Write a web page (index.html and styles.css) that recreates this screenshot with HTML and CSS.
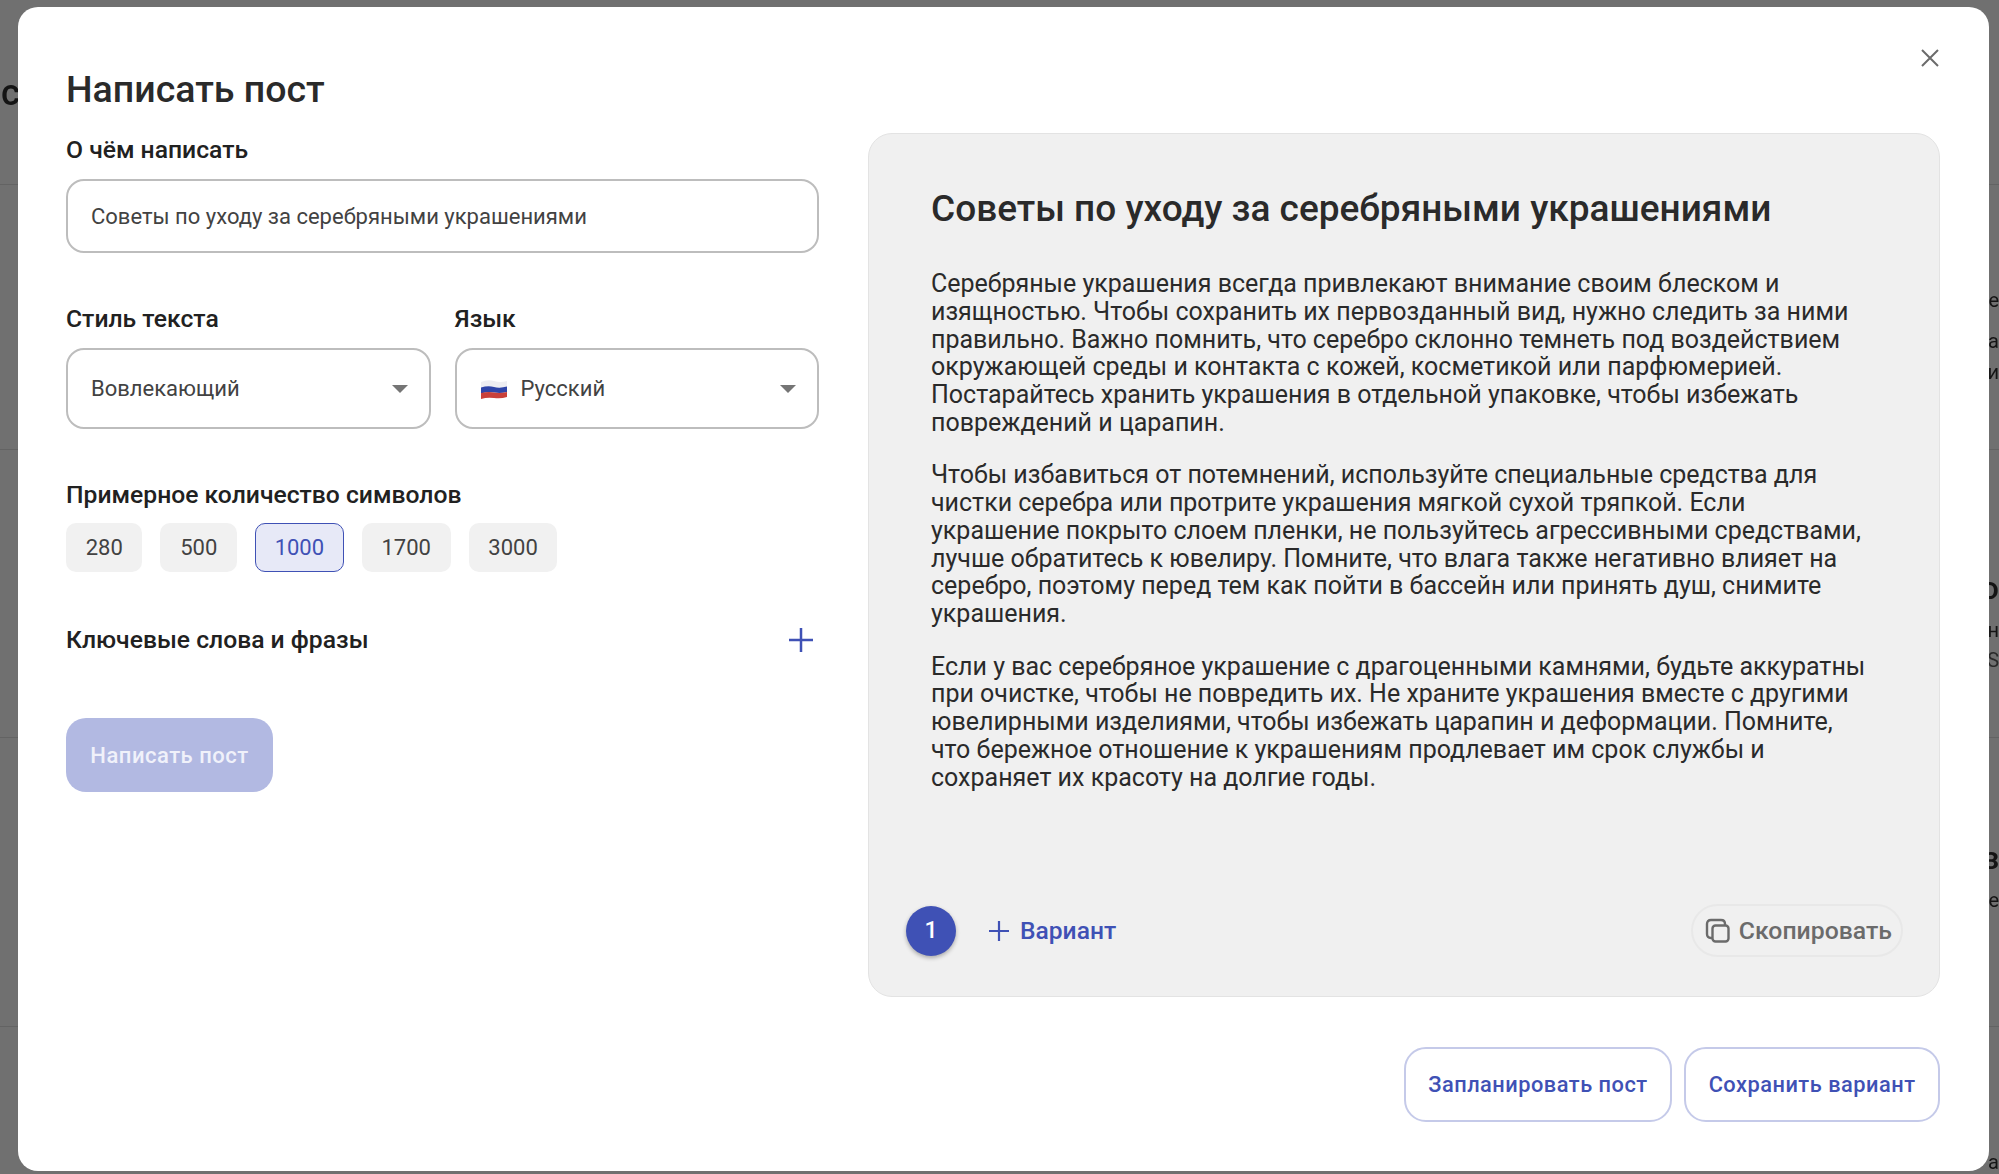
FILE: index.html
```html
<!DOCTYPE html>
<html lang="ru">
<head>
  <meta charset="UTF-8">
  <title>Написать пост</title>
  <link rel="stylesheet" href="styles.css">
</head>
<body>
  <!-- page behind the dimmed overlay -->
  <div class="backdrop">
    <div class="bg-line bg-line-1"></div>
    <div class="bg-line bg-line-2"></div>
    <div class="bg-line bg-line-3"></div>
    <div class="bg-line bg-line-4"></div>
    <span class="bg-char bg-char-1">с</span>
    <span class="bg-char bg-char-2">е</span>
    <span class="bg-char bg-char-3">а</span>
    <span class="bg-char bg-char-4">и</span>
    <span class="bg-char bg-char-5">о</span>
    <span class="bg-char bg-char-6">н</span>
    <span class="bg-char bg-char-7">S</span>
    <span class="bg-char bg-char-8">з</span>
    <span class="bg-char bg-char-9">е</span>
    <span class="bg-char bg-char-10">а</span>
  </div>

  <div class="modal">
    <button class="close-btn" aria-label="Закрыть">
      <svg width="20" height="20" viewBox="0 0 20 20"><path d="M2 2L18 18M18 2L2 18" stroke="#6b6b6b" stroke-width="2" fill="none"/></svg>
    </button>

    <div class="modal-body">
      <div class="form-col">
        <h1 class="modal-title">Написать пост</h1>

        <label class="field-label">О чём написать</label>
        <div class="text-input">Советы по уходу за серебряными украшениями</div>

        <div class="select-row">
          <div class="select-col">
            <label class="field-label">Стиль текста</label>
            <div class="select-box">
              <span class="select-value">Вовлекающий</span>
              <span class="caret"></span>
            </div>
          </div>
          <div class="select-col">
            <label class="field-label">Язык</label>
            <div class="select-box">
              <span class="select-value">
                <svg class="flag" width="26" height="20" viewBox="0 0 26 20">
                  <path d="M0 3Q7 0 13 2T26 2V8Q20 9 13 8T0 9Z" fill="#eeeef2"/>
                  <path d="M0 8.500Q7 6.500 13 8T26 7.500V13Q20 14.500 13 13.500T0 14.500Z" fill="#2f45a8"/>
                  <path d="M0 14Q7 12.500 13 13.500T26 13V18Q20 20 13 19T0 20Z" fill="#c9403a"/>
                </svg>
                Русский
              </span>
              <span class="caret"></span>
            </div>
          </div>
        </div>

        <label class="field-label chars-label">Примерное количество символов</label>
        <div class="chips">
          <span class="chip">280</span>
          <span class="chip">500</span>
          <span class="chip chip-active">1000</span>
          <span class="chip">1700</span>
          <span class="chip">3000</span>
        </div>

        <div class="keywords-row">
          <span class="field-label">Ключевые слова и фразы</span>
          <svg width="26" height="26" viewBox="0 0 26 26"><path d="M13 1V25M1 13H25" stroke="#3f51b5" stroke-width="2.500" fill="none"/></svg>
        </div>

        <button class="submit-btn">Написать пост</button>
      </div>

      <div class="result-col">
        <div class="result-panel">
          <div class="result-text">
            <h2 class="result-title">Советы по уходу за серебряными украшениями</h2>
            <p>Серебряные украшения всегда привлекают внимание своим блеском и<br>изящностью. Чтобы сохранить их первозданный вид, нужно следить за ними<br>правильно. Важно помнить, что серебро склонно темнеть под воздействием<br>окружающей среды и контакта с кожей, косметикой или парфюмерией.<br>Постарайтесь хранить украшения в отдельной упаковке, чтобы избежать<br>повреждений и царапин.</p>
            <p>Чтобы избавиться от потемнений, используйте специальные средства для<br>чистки серебра или протрите украшения мягкой сухой тряпкой. Если<br>украшение покрыто слоем пленки, не пользуйтесь агрессивными средствами,<br>лучше обратитесь к ювелиру. Помните, что влага также негативно влияет на<br>серебро, поэтому перед тем как пойти в бассейн или принять душ, снимите<br>украшения.</p>
            <p>Если у вас серебряное украшение с драгоценными камнями, будьте аккуратны<br>при очистке, чтобы не повредить их. Не храните украшения вместе с другими<br>ювелирными изделиями, чтобы избежать царапин и деформации. Помните,<br>что бережное отношение к украшениям продлевает им срок службы и<br>сохраняет их красоту на долгие годы.</p>
          </div>
          <div class="result-footer">
            <span class="variant-num">1</span>
            <span class="variant-add">
              <svg width="22" height="22" viewBox="0 0 22 22"><path d="M11 1V21M1 11H21" stroke="#3f51b5" stroke-width="2.200" fill="none"/></svg>
              Вариант
            </span>
            <span class="copy-btn">
              <svg width="26" height="26" viewBox="0 0 26 26" fill="none" stroke="#6b6b6b" stroke-width="2.400">
                <rect x="7.500" y="7.500" width="16" height="16" rx="3"/>
                <path d="M7.500 20H6Q2 20 2 16V6Q2 2 6 2H16Q20 2 20 6V7.500"/>
              </svg>
              Скопировать
            </span>
          </div>
        </div>
      </div>
    </div>

    <div class="modal-actions">
      <button class="outline-btn">Запланировать пост</button>
      <button class="outline-btn">Сохранить вариант</button>
    </div>
  </div>
</body>
</html>
```

FILE: styles.css
```css
html, body {
  margin: 0;
  height: 100%;
  overflow: hidden;
}
body {
  font-family: Roboto, "Liberation Sans", sans-serif;
  background-color: #707070;
  color: #1f1f1f;
  padding: 7px 10px 3px 18px;
  box-sizing: border-box;
}

/* dimmed page under the modal */
.backdrop {
  position: fixed;
  left: 0;
  top: 0;
  width: 100%;
  height: 100%;
}
.bg-line {
  position: absolute;
  left: 0;
  right: 0;
  height: 1px;
  background-color: #636363;
}
.bg-line-1 { top: 184px; }
.bg-line-2 { top: 449px; }
.bg-line-3 { top: 737px; }
.bg-line-4 { top: 1026px; }
.bg-char {
  position: absolute;
  right: 0;
  font-size: 20px;
  line-height: 24px;
  color: #141414;
}
.bg-char-1 { left: 1px; right: auto; top: 72px; font-size: 36px; line-height: 42px; font-weight: 500; }
.bg-char-2 { top: 288px; }
.bg-char-3 { top: 329px; }
.bg-char-4 { top: 360px; }
.bg-char-5 { top: 570px; font-size: 32px; line-height: 36px; font-weight: 500; }
.bg-char-6 { top: 618px; }
.bg-char-7 { top: 648px; color: #2a2a2a; }
.bg-char-8 { top: 840px; font-size: 32px; line-height: 36px; font-weight: 500; }
.bg-char-9 { top: 888px; }
.bg-char-10 { top: 1150px; }

.modal {
  position: relative;
  height: 100%;
  background-color: #fff;
  border-radius: 20px;
  padding: 61px 49px 50px 48px;
  box-sizing: border-box;
}
.close-btn {
  position: absolute;
  top: 41px;
  right: 49px;
  padding: 0;
  width: 20px;
  height: 20px;
  border: none;
  background: none;
  line-height: 0;
}

.modal-body {
  display: flex;
  gap: 49px;
}
.form-col {
  width: 753px;
  flex-shrink: 0;
}
.modal-title {
  margin: 0 0 26px;
  font-size: 37.500px;
  line-height: 42px;
  font-weight: 500;
  color: #2a2a2a;
}
.field-label {
  display: block;
  font-size: 24.700px;
  line-height: 28px;
  font-weight: 500;
  color: #212121;
}
.text-input {
  margin-top: 15px;
  height: 74px;
  border: 2px solid #bdbdbd;
  border-radius: 18px;
  box-sizing: border-box;
  padding-left: 23px;
  display: flex;
  align-items: center;
  font-size: 22px;
  color: #424242;
}
.select-row {
  display: flex;
  gap: 24px;
  margin-top: 52px;
}
.select-col {
  flex: 1;
}
.select-box {
  margin-top: 15px;
  height: 81px;
  border: 2px solid #bdbdbd;
  border-radius: 18px;
  box-sizing: border-box;
  padding: 0 21px 0 23px;
  display: flex;
  align-items: center;
  justify-content: space-between;
  font-size: 22px;
  color: #424242;
}
.select-value {
  display: flex;
  align-items: center;
  gap: 14px;
}
.flag {
  margin-left: 1px;
}
.caret {
  width: 0;
  height: 0;
  border-left: 8px solid transparent;
  border-right: 8px solid transparent;
  border-top: 8px solid #757575;
}
.chars-label {
  margin-top: 52px;
}
.chips {
  display: flex;
  gap: 18px;
  margin-top: 14px;
}
.chip {
  height: 49px;
  padding: 0 19.700px;
  border-radius: 10px;
  background-color: #f1f1f1;
  box-sizing: border-box;
  display: flex;
  align-items: center;
  font-size: 22px;
  color: #424242;
}
.chip-active {
  padding: 0 18.700px;
  background-color: #e7e9f7;
  border: 1px solid #3f51b5;
  color: #3f51b5;
}
.keywords-row {
  display: flex;
  align-items: center;
  justify-content: space-between;
  margin-top: 54px;
  padding-right: 5px;
}
.submit-btn {
  display: block;
  margin-top: 64px;
  width: 207px;
  height: 74px;
  border: none;
  border-radius: 20px;
  background-color: #b2b9e2;
  color: #f0f1fa;
  font-family: inherit;
  font-size: 22px;
  font-weight: 500;
  letter-spacing: 0.5px;
}

.result-col {
  flex: 1;
  margin-top: 65px;
}
.result-panel {
  height: 864px;
  box-sizing: border-box;
  background-color: #f0f0f0;
  border: 1px solid #e3e3e3;
  border-radius: 24px;
  padding: 0 36px 0 37px;
  display: flex;
  flex-direction: column;
}
.result-text {
  flex: 1;
  padding: 53px 25px 0;
}
.result-title {
  margin: 0 0 39px;
  font-size: 37px;
  line-height: 44px;
  font-weight: 500;
  color: #2a2a2a;
}
.result-text p {
  margin: 0 0 24.500px;
  font-size: 25px;
  line-height: 27.800px;
  color: #2a2a2a;
  white-space: nowrap;
}
.result-footer {
  display: flex;
  align-items: center;
  margin-bottom: 39px;
}
.variant-num {
  width: 50px;
  height: 50px;
  border-radius: 50%;
  background-color: #3f51b5;
  box-shadow: 0 2px 4px rgba(0, 0, 0, 0.3);
  color: #fff;
  display: flex;
  align-items: center;
  justify-content: center;
  font-size: 23px;
  font-weight: 500;
}
.variant-add {
  margin-left: 32px;
  display: flex;
  align-items: center;
  gap: 10px;
  font-size: 24.600px;
  font-weight: 500;
  color: #3f51b5;
}
.copy-btn {
  margin-left: auto;
  height: 53px;
  padding: 0 9px 0 12px;
  border: 2px solid #e8e8e8;
  border-radius: 27px;
  box-sizing: border-box;
  display: flex;
  align-items: center;
  gap: 8px;
  font-size: 24.800px;
  font-weight: 500;
  color: #6b6b6b;
}

.modal-actions {
  display: flex;
  justify-content: flex-end;
  gap: 12px;
  margin-top: 50px;
}
.outline-btn {
  height: 75px;
  padding: 0 22.500px;
  background-color: #fff;
  border: 2px solid #c5cae9;
  border-radius: 22px;
  color: #3f51b5;
  font-family: inherit;
  font-size: 21.800px;
  font-weight: 500;
  letter-spacing: 0.5px;
}
```
